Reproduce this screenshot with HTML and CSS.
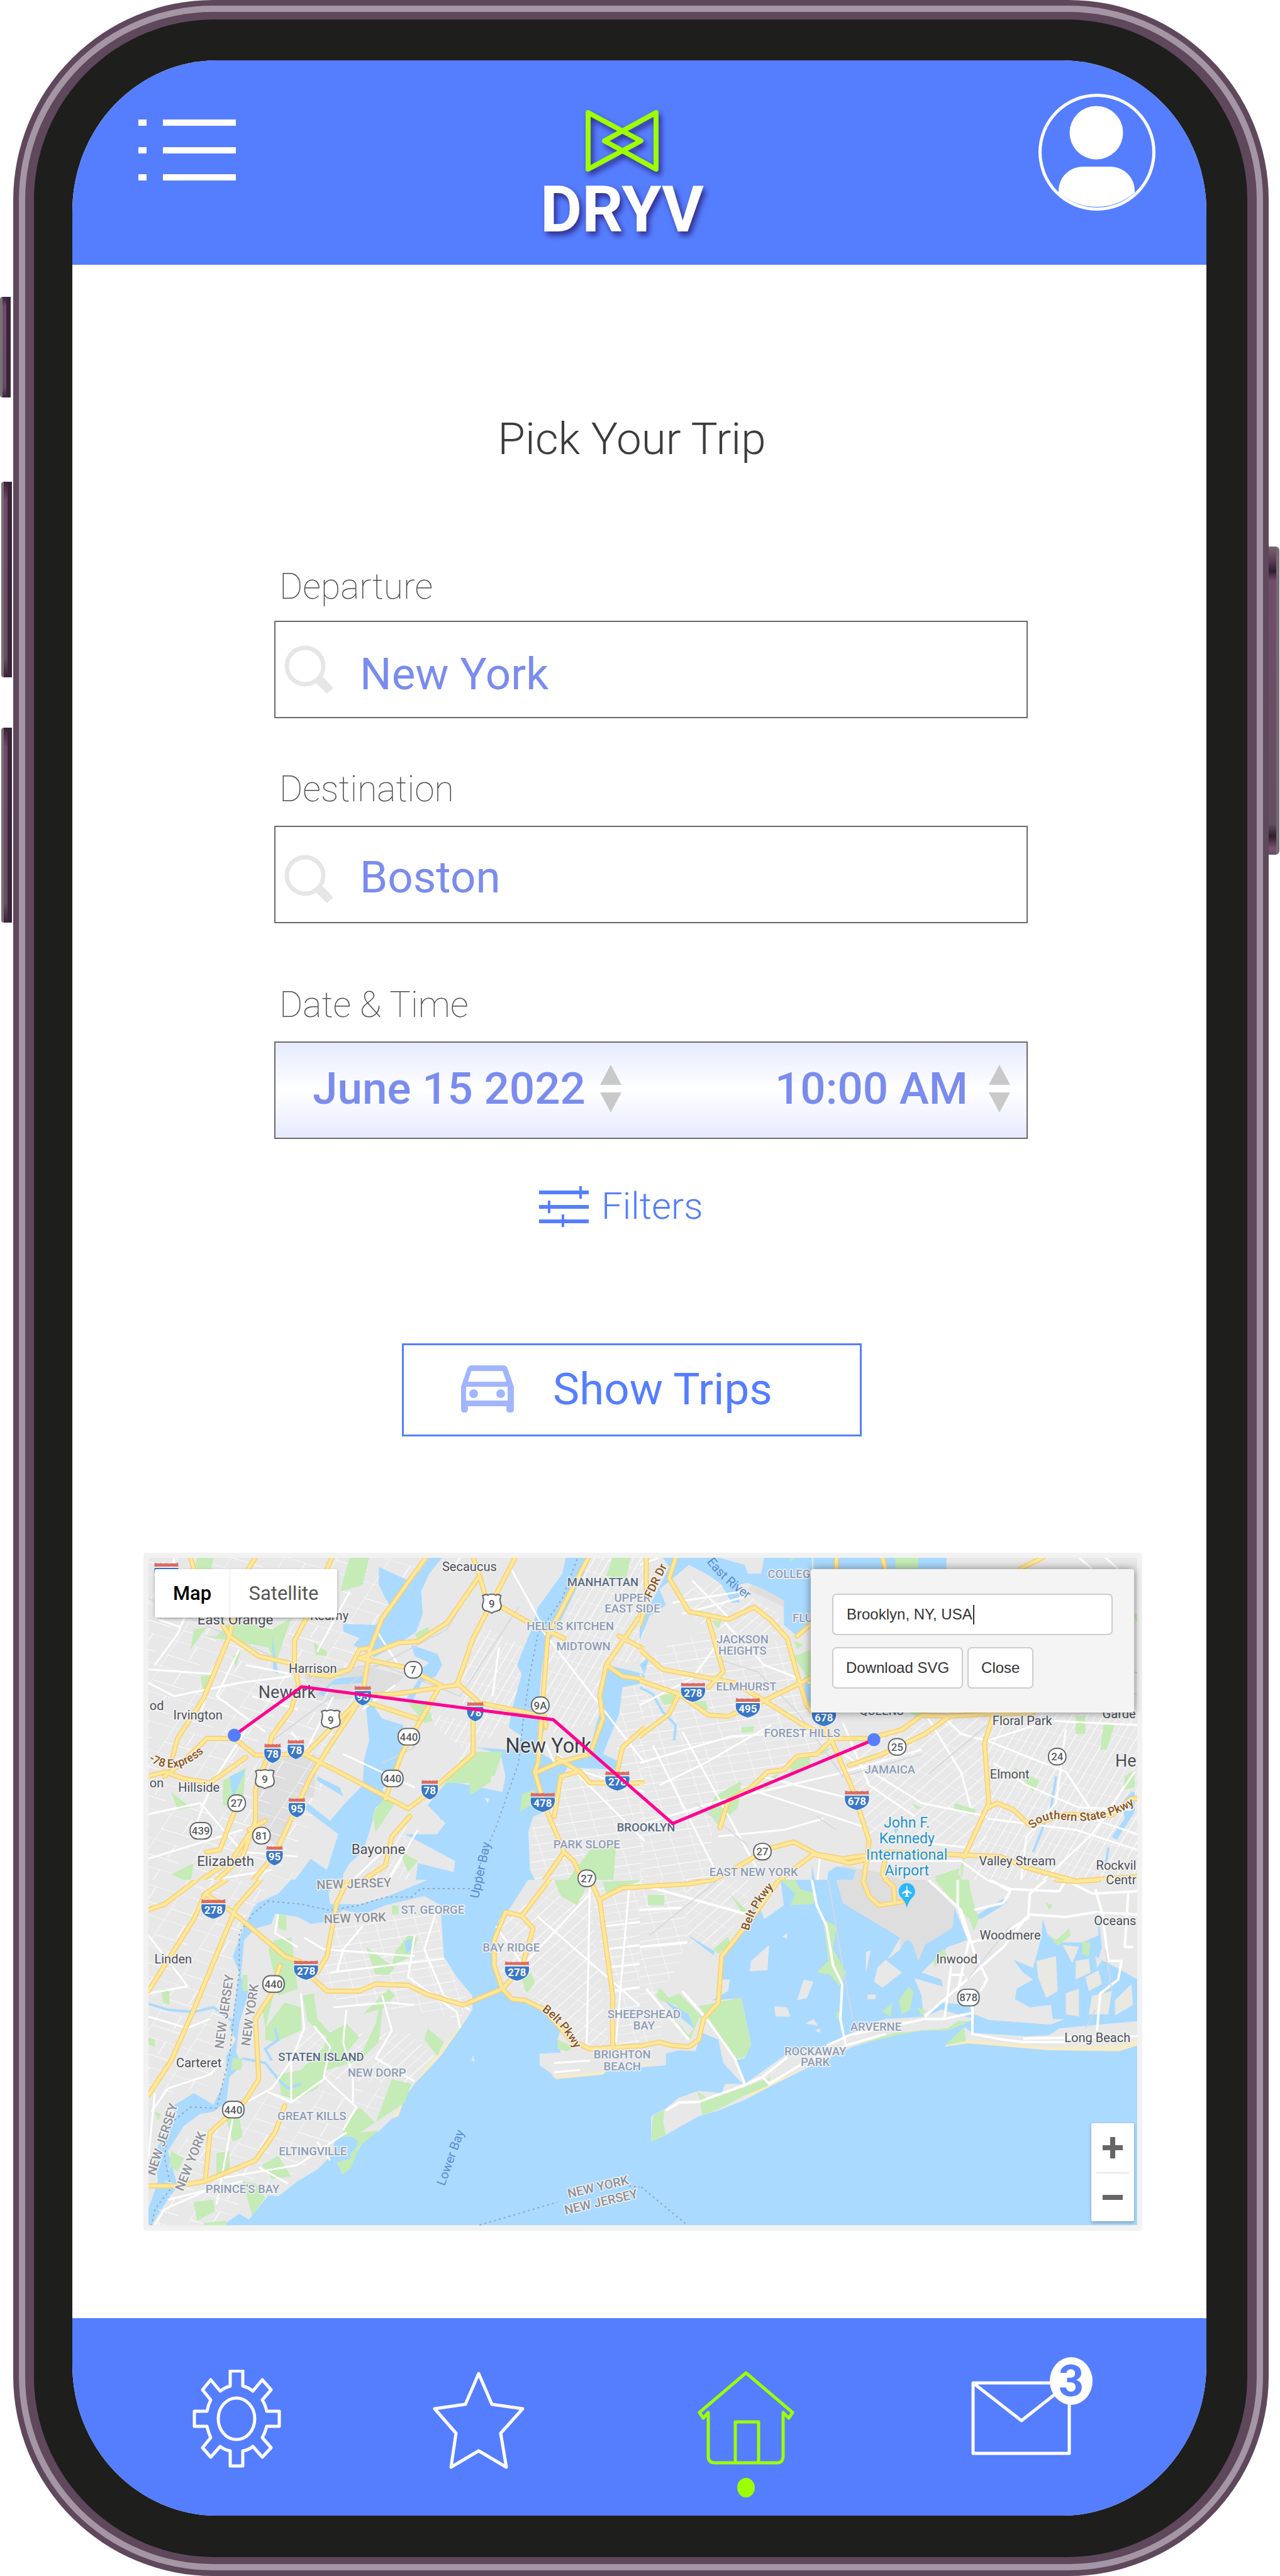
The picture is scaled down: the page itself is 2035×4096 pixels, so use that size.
FILE: index.html
```html
<!DOCTYPE html>
<html lang="en">
<head>
<meta charset="utf-8">
<meta name="viewport" content="width=device-width, initial-scale=1">
<title>DRYV – Pick Your Trip</title>
<link rel="stylesheet" href="styles.css">
</head>
<body>
<div class="device">
  <div class="side side-left">
    <span class="key key-mute"></span>
    <span class="key key-up"></span>
    <span class="key key-down"></span>
  </div>
  <div class="shell"><div class="rail"><div class="rim"><div class="bezel"><div class="screen">

    <header class="topbar">
      <button class="icon-button menu" type="button" aria-label="Menu">
        <svg width="155" height="97" viewBox="0 0 155 97" fill="#fff"><path d="M0 0h13v10H0zM39 0h116v10H39zM0 44h13v10H0zM39 44h116v10H39zM0 87h13v10H0zM39 87h116v10H39z"/></svg>
      </button>
      <a class="brand" href="#">
        <svg class="brand-mark" width="118" height="100" viewBox="0 0 118 100" fill="none" stroke="#9eff00" stroke-width="8" stroke-linejoin="round"><path d="M5 5v90l84-45zM113 5v90L31 50z"/></svg>
        <span class="brand-name">DRYV</span>
      </a>
      <button class="icon-button avatar" type="button" aria-label="Profile">
        <svg width="186" height="186" viewBox="0 0 186 186"><circle cx="93" cy="93" r="90.500" fill="none" stroke="#fff" stroke-width="5"/><circle cx="92" cy="62" r="42.500" fill="#fff"/><path fill="#fff" d="M32 157V155C32 132 50 116 71 116H114C135 116 153 132 153 155V157A91 91 0 0 1 32 157Z"/></svg>
      </button>
    </header>

    <main class="content">
      <h1 class="title">Pick Your Trip</h1>
      <form class="trip-form">
        <div class="field">
          <label class="field-label" for="departure">Departure</label>
          <div class="control">
            <svg class="lens" width="78" height="77" viewBox="0 0 78 77"><circle cx="33" cy="33" r="29" fill="none" stroke="#e6e6e6" stroke-width="7"/><path fill="#e6e6e6" d="M49 59L60 49L78 68L68 77Z"/></svg>
            <input class="place" id="departure" type="text" value="New York">
          </div>
        </div>
        <div class="field">
          <label class="field-label" for="destination">Destination</label>
          <div class="control control-low">
            <svg class="lens" width="78" height="77" viewBox="0 0 78 77"><circle cx="33" cy="33" r="29" fill="none" stroke="#e6e6e6" stroke-width="7"/><path fill="#e6e6e6" d="M49 59L60 49L78 68L68 77Z"/></svg>
            <input class="place" id="destination" type="text" value="Boston">
          </div>
        </div>
        <div class="field field-when">
          <label class="field-label" for="date">Date &amp; Time</label>
          <div class="control control-when">
            <div class="slot">
              <input class="when when-date" id="date" type="text" value="June 15 2022">
              <button class="icon-button" type="button" aria-label="Change date"><svg width="34" height="76" viewBox="0 0 34 76" fill="#c9c9c9"><path d="M17 0L34 32H0zM0 44H34L17 76z"/></svg></button>
            </div>
            <div class="slot">
              <input class="when when-time" type="text" aria-label="Time" value="10:00 AM">
              <button class="icon-button" type="button" aria-label="Change time"><svg width="34" height="76" viewBox="0 0 34 76" fill="#c9c9c9"><path d="M17 0L34 32H0zM0 44H34L17 76z"/></svg></button>
            </div>
          </div>
        </div>
        <button class="filters" type="button">
          <svg width="79" height="65" viewBox="0 0 79 65" fill="#557eff"><path d="M0 7h79v6H0zM0 30h79v6H0zM0 53h79v6H0zM64 0h4v20h-4zM14 23h4v20h-4zM36 45h4v20h-4z"/></svg>
          <span>Filters</span>
        </button>
      </form>
      <button class="show-trips" type="button">
        <svg width="84" height="75" viewBox="0 0 84 75"><path fill="#a1b6ff" fill-rule="evenodd" d="M0 34L10 5Q12 0 17 0H67Q72 0 74 5L84 34V70Q84 75 79 75H77Q72 75 72 70V65H11V70Q11 75 6 75H5Q0 75 0 70ZM16 9L11 26H72L66 9ZM8 34V56H74V34Z"/><circle cx="20" cy="45" r="7" fill="#a1b6ff"/><circle cx="63" cy="45" r="7" fill="#a1b6ff"/></svg>
        <span>Show Trips</span>
      </button>

      <section class="map" aria-label="Trip map">
        <svg class="map-art" viewBox="307 3216 2039 1377">
          <defs>
            <pattern id="grid-steep" width="44" height="66" patternUnits="userSpaceOnUse" patternTransform="rotate(22)"><path class="st" d="M0 0H44M0 0V66M22 0V66"/></pattern>
            <pattern id="grid-flat" width="62" height="74" patternUnits="userSpaceOnUse" patternTransform="rotate(-12)"><path class="st" d="M0 0H62M0 0V74M0 40H62"/></pattern>
            <pattern id="grid-diag" width="58" height="72" patternUnits="userSpaceOnUse" patternTransform="rotate(38)"><path class="st" d="M0 0H58M0 0V72M30 0V72"/></pattern>
            <pattern id="grid-wide" width="150" height="120" patternUnits="userSpaceOnUse" patternTransform="rotate(24)"><path class="st" d="M0 0H150M0 0V120M70 0V60M0 70H110"/></pattern>
            <g id="i2"><path fill="#3a78c8" stroke="#fff" stroke-width="1" d="M-17-10H17C20 6 15 16 0 21C-15 16-20 6-17-10Z"/><path fill="#db6b63" d="M-16-20Q-12-17-8-19Q-4-17 0-19Q4-17 8-19Q12-17 16-20L17-12H-17Z"/></g>
            <g id="i3"><path fill="#3a78c8" stroke="#fff" stroke-width="1" d="M-25-10H25C28 6 20 16 0 21C-20 16-28 6-25-10Z"/><path fill="#db6b63" d="M-24-20Q-18-17-12-19Q-6-17 0-19Q6-17 12-19Q18-17 24-20L25-12H-25Z"/></g>
            <path id="u9" fill="#fff" stroke="#606468" stroke-width="2" d="M-19-16Q-12-20-8-17Q0-21 8-17Q12-20 19-16Q15-8 19 2Q21 14 10 16Q4 17 0 20Q-4 17-10 16Q-21 14-19 2Q-15-8-19-16Z"/>
            <rect id="c2" x="-18" y="-17" width="36" height="34" rx="16" fill="#fff" stroke="#606468" stroke-width="2.500"/>
            <rect id="c3" x="-22" y="-17" width="44" height="34" rx="15" fill="#fff" stroke="#606468" stroke-width="2.500"/>
            <path id="p-78" d="M307 3634Q362 3670 420 3618"/>
            <path id="p-east" d="M1458 3224Q1488 3268 1560 3314"/>
            <path id="p-south" d="M2130 3776Q2155 3750 2190 3756Q2270 3768 2338 3726"/>
            <path id="p-belt1" d="M1118 4150Q1165 4182 1196 4248"/>
            <path id="p-belt2" d="M1545 3986Q1560 3930 1604 3888"/>
          </defs>
          <rect x="307" y="3216" width="2039" height="1377" fill="#e8e8e8"/>

          <svg x="280" y="3180" width="1050" height="720" viewBox="0 0 1568 1568" preserveAspectRatio="none">
            <path class="airport" d="M430 980L560 960L550 1150L500 1180L440 1380L380 1300L370 1120ZM520 610L700 560L830 610L760 700L560 720Z"/>
            <path fill="url(#grid-wide)" d="M40 77H900L700 600L600 1000L470 1568H40Z"/>
            <path fill="url(#grid-steep)" d="M1380 77H1568V540L1440 560L1430 820L1270 870L1260 500ZM1060 380L1200 480L1160 800L1060 920L990 660ZM860 760L1040 820L1030 960L830 1290L720 1500L640 1568H850L830 1300L960 1080L1010 940Z"/>
            <path fill="url(#grid-flat)" d="M1490 660L1568 640V1568H1210L1220 1300L1330 1020L1480 1040Z"/>
            <path class="park" d="M190 77H240L230 170L165 260ZM660 77H720L700 200L630 230ZM210 430H250L300 350L420 400L480 350L430 560L410 480ZM180 400L220 390L170 490ZM1470 77H1525L1510 180L1450 160ZM550 460L590 500V520L555 515ZM860 420L900 390L915 430L870 450ZM840 730L900 720L915 810L890 820ZM270 1080L340 1020L330 1200L270 1190ZM110 1130L170 1200L130 1210ZM300 520L325 500L310 570ZM200 610L250 600L210 690Z"/>
            <path class="water" d="M905 77H945L905 150L880 230L885 330L865 410L800 475L735 525L672 470L690 440L640 410V375L740 380L790 310L770 260L750 200V120L840 180L875 140ZM850 470L930 510L945 560L925 610L880 640L855 720L835 710L875 620L870 590L905 550L860 520ZM560 690L620 620L700 610L730 700V735L760 800L825 830V910L815 1000L760 1120L780 1160L740 1200L725 1290L700 1400L660 1450L640 1500V1568H470L540 1430L590 1480L625 1320L525 1210L530 1180L600 1260L640 1190L700 1100L705 980L720 900L710 740L700 640L600 650L580 700ZM1325 77H1400L1375 170L1310 360L1260 500L1250 600L1240 780L1260 850L1230 940L1300 1000L1400 950L1420 820L1440 740L1430 650L1450 560L1568 600V640L1500 660L1490 780L1440 960L1500 1000L1480 1030L1330 1020L1300 1120L1280 1210L1225 1240L1210 1310L1215 1480L1245 1568H860L870 1450L980 1490L985 1440L830 1320L930 1320L955 1270L900 1190L960 1080L1130 1130L1140 1060L1125 960L1050 930L1150 940L1190 880L1150 840L1160 760L1190 600L1175 560L1220 400L1240 300L1315 150ZM560 1060L630 1110L640 1150L560 1080ZM915 1180L960 1240L940 1255ZM420 420L440 600L425 590ZM290 1060L340 1030L300 1160Z"/>
            <path class="park" d="M1000 990L1040 950L1132 950L1100 1080L1030 1145L1030 1090L960 1090L930 1140ZM730 1230L770 1150L800 1180L740 1310ZM1190 1140L1230 1120L1235 1170L1185 1220ZM1400 1390L1480 1370L1470 1568H1310ZM110 1500L180 1450L170 1540ZM810 1390L870 1440L840 1490Z"/>
            <path class="land" d="M1095 1060L1115 1055L1110 1085H1095ZM1075 1155L1090 1160L1085 1180Z"/>
            <path class="street" d="M120 80L60 350L140 390M200 180L130 420L60 560M40 580L240 600L200 780M320 490L250 700L400 860M340 560L480 600M360 700L500 760M600 77L560 340L400 330M660 230L560 500M40 640L120 700L320 640L480 610M740 400L810 560M800 650L700 760M610 700L520 960M350 830L240 1080L180 1300M40 1230L200 1180L330 1400L500 1420M40 1430L330 1300M60 1568L420 1480M480 860L560 1000M640 960L860 1110M980 130L1000 77M1150 110L1260 400M1240 380L1568 1000M1120 480L1100 700M1260 900L1290 1000M1300 960L1568 1350M1340 1020L1568 1130M870 1300L760 1568M760 1400L640 1568"/>
            <path class="rail-line" d="M1080 100L960 400L700 600L420 900M1180 300L1000 700L760 560L540 590M800 840L860 930L760 1000M40 260L420 520"/>
            <path class="border-line" d="M1360 85L1315 260L1240 420L1215 600L1195 800L1180 1000L1110 1290L1060 1460L1035 1568L870 1562"/>
            <g id="roads-nw">
              <path d="M170 77L190 180L290 430L380 520L470 550L540 600L600 610L660 580L690 490L715 485M370 77L330 170L290 430L210 710L130 890L115 970M605 77L530 340L490 450L490 560L502 650L480 760L420 880L405 980L370 1120L370 1260L330 1420L220 1568M40 1060L90 1040L150 1070L230 1090L340 975M90 1060L150 990L220 890L305 890L370 965L520 960L640 1050L840 1205L890 1150L1040 960L1040 760M895 77L760 350L720 500L700 690L720 730L865 800M1040 77L1060 160L960 370L870 455L810 460L690 530L830 570L940 650M1170 77L1040 440L990 650L800 690L720 695M940 650L820 960L770 1160M990 640L1060 730L1260 790L1265 840M700 700L600 920L540 1060L430 1410L340 1568M700 700L530 950M1060 160L1080 260L1200 360L1320 440M1395 77L1270 430L1240 1000L1230 1040L1260 1190L1320 1400L1350 1440L1390 1568M1568 310L1450 560L1430 700L1440 800L1400 960L1300 1000L1240 1040M1450 560L1500 610L1568 625M1300 980L1370 1040L1400 1090L1568 1090M1360 1040L1310 1060L1290 1240M1480 1060L1500 930L1568 840M1490 430L1568 490M1320 1400L1240 1568M310 1200L260 1390L220 1400M845 1240L790 1330L770 1460L660 1568M400 1260L350 1300M160 1568L300 1430L350 1320"/>
            </g>
            <use class="road-core" href="#roads-nw"/>
          </svg>

          <svg x="1320" y="3180" width="1060" height="720" viewBox="0 0 1568 1568" preserveAspectRatio="none">
            <path fill="url(#grid-flat)" d="M0 530L200 400L460 460L520 800L600 940L380 1060L220 1260V1568H0Z"/>
            <path fill="url(#grid-diag)" d="M100 250L250 160L420 330L450 430L200 400ZM600 960L800 830L1060 790V1400L700 1330Z"/>
            <path fill="url(#grid-steep)" d="M530 780H1518V1568H1000L1060 1200V790Z"/>
            <path class="airport" d="M540 1568L620 1460L760 1500L860 1568ZM250 90L310 110L320 180L260 170ZM370 160H440V300L330 220Z"/>
            <path class="water" d="M70 77H240L320 110L330 150H370L380 77H525V380L480 430L440 380L440 270L380 220L330 190L300 200L305 280H280L250 200L215 160L150 110L60 220L80 290L30 340L0 450V370L50 240L90 120ZM530 77H936V128H530ZM500 620L525 600V750L505 700ZM0 560L30 520L15 600ZM1500 1130L1470 1180L1480 1250L1440 1330L1455 1345L1510 1220V1130ZM1490 590H1518V600ZM525 1455L540 1568H525ZM575 1490L600 1465L660 1480L640 1568H570ZM775 1270L790 1300L778 1320Z"/>
            <path class="thin-water" d="M0 660L40 690L70 770L110 830L105 900M1270 1060L1255 1200L1200 1400M1430 1380L1420 1470"/>
            <path class="park" d="M455 77H475L460 95ZM780 77H850V128H780ZM470 450L500 470L480 490ZM470 520L525 490V680L500 590ZM220 360L250 360L240 400ZM60 700L120 680L110 730L75 740ZM160 720L200 720L210 760L170 760ZM310 840L350 835L345 860L310 865ZM230 1150L310 1080L300 1200L240 1280L210 1220ZM390 1070L430 1040L380 1130ZM460 1000L520 960L520 1010L460 1050ZM1330 790H1360V870H1330ZM1415 830L1450 820L1425 940H1405ZM1480 1060L1510 1030V1110L1475 1120ZM960 1180L1025 1210L1020 1235L960 1210ZM1140 1020L1220 1080L1200 1130ZM900 1510L980 1470V1568H920ZM990 1420L970 1500L985 1510ZM830 1180L860 1200L845 1210ZM530 950L590 930L560 960ZM820 770H870L850 800ZM1500 330H1518V370Z"/>
            <path class="street" d="M0 110L60 77M160 180L280 360M100 280L310 230M130 330L330 250M260 370L380 560L520 640M0 740L160 620L260 420M0 1000L280 880L520 860M60 1100L200 1000L400 830M0 1280L220 1180L600 1050L860 940M40 920L260 1568M130 860L360 1480M370 1060L700 1180M340 1120L690 1290M620 820L700 1100L840 1240M880 800L980 1040L1010 1200M620 960L860 1180L1060 1240M920 780L980 870L1060 900L1250 810L1518 830M1060 900L1300 1040L1400 1260L1518 1320M1300 850L1270 1180L1180 1330L1160 1568M1080 1000L1180 1100L1340 1200L1500 1210M1060 1250L1330 1300L1518 1390M1200 1568L1380 1320L1510 1040M750 1340L1000 1380M700 1440L980 1440L1100 1568M550 1420L540 1568M240 1330L440 1300L560 1250M1340 77L1380 128M1420 77L1460 128"/>
            <path class="rail-line" d="M250 540L360 590L480 770L620 1060L860 960M880 1050L1060 830M170 1180L330 1370M540 1240L600 1300M1230 700L1518 690"/>
            <g id="roads-ne">
              <path d="M110 77L90 170L150 320L270 355L350 300L400 360L450 440L480 600L510 740L580 880L650 1120L700 1350L680 1568M20 77V290L0 380M0 490L70 580L290 640L380 720L500 830L590 890L700 890L800 850L860 785L940 790L1060 780L1200 775M0 630L120 690L210 785L270 790L380 720L520 620M120 690L90 780L0 880M210 360L255 590L210 660M600 77V128M740 77L750 128M1160 128L1230 77M520 380L480 430M640 1010L740 960L870 870L950 785M590 890L540 960L480 970L440 1030L390 1040L340 1110L270 1170L245 1290M1080 780L1052 910L1065 1180L990 1420M1065 1200L1090 1180L1140 1210L1190 1280L1300 1230L1440 1235L1500 1160H1518M0 1550L220 1530L330 1440L380 1390L470 1355L540 1410L620 1430L760 1400L1100 1420L1180 1470L1330 1530L1518 1510M400 1568L440 1510L530 1410L640 1450L700 1430M750 1420L740 1500L775 1568"/>
            </g>
            <use class="road-core" href="#roads-ne"/>
          </svg>

          <svg x="280" y="3880" width="1050" height="750" viewBox="0 0 1568 1568" preserveAspectRatio="none">
            <path class="water" d="M40 0H1568V1489H40Z"/>
            <path class="land" d="M40 0H480L440 60L370 105L335 200L300 330L320 400L300 600L290 640L310 690L280 760L280 840L265 900L240 970L180 920L110 980L130 1010L90 1090L60 1180L70 1300L40 1420ZM610 0H900L850 30L770 75L690 105H600L595 60ZM430 145L500 160L540 190L600 180L640 130L700 150L770 110L890 70L940 110L950 330L990 420L1038 500V560L1000 640L940 760L860 880L830 940L790 1030L750 1085L710 1110L685 1170L660 1230L638 1270L622 1220L665 1200L685 1150L670 1110L640 1100L612 1130L610 1180L560 1250L500 1300L440 1365L410 1360L350 1465L320 1440L270 1489H50L90 1400L130 1320L100 1170L150 1060L200 1010L240 1000L280 960L290 850L330 800L310 745L320 620L350 480L325 420L335 260L370 210L420 190ZM1210 0H1568V800L1440 830L1290 855L1280 835L1245 800L1245 750L1310 745L1300 690L1310 640L1250 560L1190 515L1150 500L1110 400L1100 300L1120 170L1150 130ZM1035 780L1040 755L1045 785Z"/>
            <path class="sand" d="M1035 570L1000 640L940 760L860 880L900 800L960 700ZM830 940L790 1030L810 1020ZM1290 845L1450 825L1440 840L1295 860Z"/>
            <path fill="url(#grid-wide)" d="M40 0H420L300 300L290 560L250 880L40 940ZM110 1180L240 1010L400 920L840 890L600 1140L450 1320L250 1489H60Z"/>
            <path fill="url(#grid-flat)" d="M620 190L930 110L950 340L1030 540L1000 600L840 560L630 540L560 400ZM1400 0H1568V730H1480Z"/>
            <path fill="url(#grid-diag)" d="M1130 170L1280 0L1400 60L1460 740L1370 710L1230 520L1110 380ZM500 620L620 660L840 660L920 760L840 880L600 860L490 760Z"/>
            <path class="park" d="M710 290L800 380L780 410L740 410ZM840 240L870 250L850 330L790 370L800 310ZM440 150L465 150V220L440 210ZM400 640L460 530L510 550V650L430 700L400 690ZM515 500L550 490L560 600L600 660L650 620L690 680L640 760L700 740L740 620L750 560L700 580L780 470L800 500L760 560L750 700L690 780L590 820L560 900L490 950L450 930L440 840L510 820L580 720L590 680L530 610ZM430 260L480 250L500 470L440 500L410 300ZM390 540L430 470L400 640ZM900 640L950 700L930 760L890 690ZM790 860L850 880L830 960L640 1140L640 1070L690 980L740 1050ZM640 1100L750 1080L690 1150L665 1240L640 1270L620 1220L665 1200ZM110 1170L150 1200L130 1260L105 1230ZM280 1030L320 1020L330 1110L300 1130ZM250 1180L290 1170V1260L250 1270ZM390 1230L440 1190L480 1280L420 1290ZM180 1390L240 1380L245 1430L190 1470ZM330 1300L370 1310L400 1370L360 1450ZM210 1480L280 1470V1489H210ZM300 770L330 770L325 820L295 820ZM1290 0H1400L1360 110L1310 70ZM1440 10L1568 0L1450 60ZM1190 430L1220 400L1230 450L1205 490ZM1300 690L1350 720L1330 740L1300 730ZM80 470L105 480V540L85 530ZM60 1000L80 1010L70 1040ZM330 410H345V480H330ZM790 110H810V150H790ZM40 680L60 690V720L40 710ZM200 60L220 50L215 100Z"/>
            <path class="water" d="M640 1110Q670 1100 685 1130Q680 1170 650 1190Q610 1170 615 1130ZM830 270L850 250L850 300L835 320Z"/>
            <path class="thin-water" d="M40 535L100 560L180 570L240 550L310 620M330 770L400 790L440 860L470 900L510 880M430 640L440 690L400 730L420 780"/>
            <path class="street" d="M40 240L140 420L160 460L40 490M40 590L160 640L230 600M50 1000L100 900L230 840L270 780M40 1200L60 920M600 400L950 340M520 250L580 300L860 330M610 550L780 530L860 540M510 490L520 640L480 780V960M480 780L420 900L340 960M550 630L600 720L580 850L680 980L640 1080M590 850L480 960L400 910M860 240L840 420L990 570L1000 640M760 500L790 650L740 770L860 870M650 560L640 700L670 850V960M930 120L890 300L950 500L1030 560M700 200L640 300L620 400M440 150L430 230L500 290M250 1290L500 1230L650 1090M300 1030L250 1400M380 1240L470 1310M560 1130L600 1210M100 1380L330 1300M60 1489L90 1420L220 1340M1290 790L1400 780M1290 830L1370 820M1110 200L1210 400M1140 450L1400 60M1240 160L1568 560M1400 0L1390 710M1520 40L1480 700M1450 200L1568 180M1450 300L1568 280M1450 380L1568 360M1460 480L1568 460"/>
            <path class="border-line" d="M1030 38H880L850 75H770L690 110L600 132L510 105L410 92L360 150L320 230V400L305 560L290 760L250 985L170 980L100 1060L90 1200L110 1330L60 1420L50 1489M1060 1489L1300 1390M1520 1320L1568 1330"/>
            <g id="roads-sw">
              <path d="M40 130L90 105L190 0M280 0L215 60L180 170L40 480M385 0L310 120L180 560L110 780L40 930M215 60L300 140L460 330L520 360L550 430L590 480L690 480L740 450L840 455L900 495L1010 540L1130 470L1190 380L1225 210L1190 155L1140 140L1105 260V370L1130 470L1160 515L1200 520L1260 560L1340 690L1400 730L1568 715M1190 155L1275 0M655 0L620 100L590 330L560 400M445 370L420 490L370 600L380 860L340 950L230 1090L215 1300L370 1210L430 1090L460 975M40 1320H130L215 1300M1400 0L1430 90L1470 500V710M1430 85L1500 35L1568 30"/>
            </g>
            <use class="road-core" href="#roads-sw"/>
          </svg>

          <svg x="1320" y="3880" width="1060" height="750" viewBox="0 0 1568 1568" preserveAspectRatio="none">
            <path class="water" d="M0 0H1518V1489H0Z"/>
            <path class="land" d="M0 0H430L435 60L440 110L430 120L380 170L350 60L340 160L250 320L245 430L275 430L270 480L220 520L310 510L340 710L320 770L290 780L320 890L255 790L240 690L190 660L170 740L120 735L80 750V800L0 810ZM340 350L395 280L390 390L335 395ZM410 545L450 550L460 590H415ZM480 520L500 430L530 440L510 510ZM505 620L530 600L545 630ZM435 245L450 230V255ZM535 650L550 640V660ZM690 310L705 305L690 400ZM695 495H720V515H695ZM725 380L750 345L800 400L740 465L715 440Z"/>
            <path class="land" d="M600 0H1518V600L1360 605L1260 625L1020 600L1005 540L925 530L865 590L860 500L838 425L925 460L920 430L860 400L940 290L1000 260L960 120L955 205L870 280L850 350L835 285Q815 230 795 300L755 345L795 250L620 100ZM35 1130V1020L80 985L120 940L180 910L250 920L260 880H320L360 840L440 760L570 715L620 680L700 620L750 600L870 590L920 560L1020 600L940 650L860 650L780 665L650 720L500 820L400 890L320 950L240 995L180 1020L80 1100ZM930 720L990 635L1015 660L1180 675L1250 670L1280 640L1518 605V715L1460 735L1250 725L1000 705Z"/>
            <path class="airport" d="M600 0H880L960 120L955 205L870 280L850 350L835 285Q815 230 795 300L795 250L620 100Z"/>
            <path class="water" d="M1230 170L1245 240L1290 270H1350L1400 240L1395 120L1410 290L1400 340L1470 390L1518 430V600L1400 605L1260 600L1255 540L1190 550L1145 515L1150 470L1200 430L1170 400L1140 345L1200 380L1225 250ZM1020 160L1110 80L1120 100L1040 170ZM1020 580L1110 630L1250 625L1300 600L1518 600V610L1280 640L1250 668L1120 665L1020 640Z"/>
            <path fill="#eae8e2" d="M1210 350L1270 330L1275 480L1240 510L1215 420ZM1330 350L1370 340L1375 400L1330 430ZM1360 420L1400 390L1410 450L1370 480ZM1390 330L1410 350L1395 380ZM1290 280L1340 290L1320 360ZM1300 490L1340 470V590L1300 580ZM1380 500L1440 480L1430 580L1370 580ZM1450 520L1500 450L1505 540L1450 585Z"/>
            <path fill="url(#grid-flat)" d="M0 0H140L140 280L100 420L0 560ZM0 600H70V700H0Z"/>
            <path fill="url(#grid-diag)" d="M140 0H350L320 140L240 290L140 280Z"/>
            <path class="sand" d="M930 720L1000 705L1250 735L1460 740L1518 715V690L1460 715L1250 720L1000 690ZM500 815L400 890L330 940L335 910ZM5 790H40L20 805Z"/>
            <path class="park" d="M430 0H475L490 40L540 60L530 105L460 110L475 60ZM180 545L310 508L340 715L320 765L290 775L210 600ZM120 490L190 590L180 600L155 690L50 500L60 465L90 510ZM60 520L150 670L165 640L110 540ZM560 170L600 200L590 300L630 400L610 460L580 410L540 400L575 350ZM225 300L270 245L275 275L240 320ZM275 60L325 130L315 150ZM25 65H75V110H25ZM900 0H1005L1010 60L1035 170L1020 220L1005 170L970 120ZM820 462L835 480L825 560L800 580L790 520ZM740 570L770 530L765 590ZM895 350L925 295L945 340L900 375ZM1240 230L1270 260L1310 210L1315 240L1275 285ZM1350 265L1375 270L1370 330L1350 320ZM35 1130L40 1020L75 990L72 1045L80 1098ZM185 955L320 895L400 850L390 890L320 930L240 990L190 1015ZM175 912L205 940L185 955ZM930 715L990 635L995 695ZM650 715L780 660L940 640L970 610L1010 610L940 650L860 652L780 672ZM1235 95L1260 110L1250 130ZM600 570H610V600H600ZM845 550L875 565L860 585Z"/>
            <path class="water" d="M75 520L150 580L165 640L130 600ZM150 240L230 310L225 325L155 250Z"/>
            <path class="street street-strong" d="M525 0L540 110L570 200L590 370L618 450L612 600L628 710M80 995L120 960L180 958L320 885L375 850L450 765M375 850L395 880L500 790L640 710L750 665M570 715L640 670L870 600H930L1010 575M1015 540V665L1110 690L1170 700L1300 700M1170 685L1518 675M130 480L210 610L290 770L322 885M880 0L980 130L1020 310L1060 430L1040 480M970 0V110L1005 260L970 480M1180 160L1110 290L990 440L870 590M1010 270L1100 240L1185 165L1190 60L1240 0M1190 150L1300 160L1390 140L1518 150M1020 130L1110 100L1130 50L1070 0M1390 40L1410 140L1430 350H1470L1460 430L1405 490L1395 650M1490 60L1480 290H1505M950 370L930 600M1060 0L1130 40L1280 50L1300 0L1380 60L1518 50M945 410H990M150 690L20 470M0 130L130 120M0 290L145 270M0 20L330 150"/>
            <path class="rail-line" d="M575 0L620 380L650 600M1130 200L1000 430M1390 560L1360 640M1420 300L1440 480M240 0L30 240"/>
            <path class="border-line" d="M5 1325L145 1489"/>
            <g id="roads-se">
              <path d="M425 0L340 170L250 330L240 530L195 600L180 690L150 720L100 715L60 700L0 718M0 30L150 18L225 0M680 0L700 70L730 110L800 95M750 0L775 30L778 95M1270 0L1330 8L1400 0"/>
            </g>
            <use class="road-core" href="#roads-se"/>
          </svg>

          <g class="lb town">
            <text x="969" y="3243">Secaucus</text><text x="486" y="3354" class="t29">East Orange</text><text x="680" y="3345">Kearny</text><text x="646" y="3453">Harrison</text><text x="593" y="3505" class="t35">Newark</text><text x="409" y="3550">Irvington</text><text x="324" y="3530">od</text><text x="411" y="3699">Hillside</text><text x="324" y="3690">on</text><text x="1132" y="3618" class="t42">New York</text><text x="781" y="3827" class="t29">Bayonne</text><text x="466" y="3851" class="t29">Elizabeth</text>
            <text x="2109" y="3561">Floral Park</text><text x="2083" y="3671">Elmont</text><text x="2099" y="3850">Valley Stream</text>
            <text x="358" y="4053">Linden</text><text x="411" y="4267">Carteret</text><text x="2084" y="4003">Woodmere</text><text x="1974" y="4053">Inwood</text><text x="2264" y="4215">Long Beach</text>
          </g>
          <g class="lb town edge">
            <text x="2343" y="3547">Garde</text><text x="2344" y="3647" class="t35">He</text><text x="2344" y="3860">Rockvil</text><text x="2344" y="3889">Centr</text><text x="2344" y="3973">Oceans</text>
          </g>
          <g class="lb borough">
            <text x="1244" y="3274">MANHATTAN</text><text x="1333" y="3780">BROOKLYN</text><text x="1819" y="3540">QUEENS</text><text x="663" y="4254">STATEN ISLAND</text>
          </g>
          <g class="lb hood">
            <text x="1305" y="3307">UPPER</text><text x="1305" y="3329">EAST SIDE</text><text x="1177" y="3365">HELL'S KITCHEN</text><text x="1204" y="3407">MIDTOWN</text><text x="1211" y="3815">PARK SLOPE</text><text x="1628" y="3257">COLLEG</text><text x="1656" y="3348">FLU</text><text x="1532" y="3392">JACKSON</text><text x="1532" y="3416">HEIGHTS</text><text x="1540" y="3490">ELMHURST</text><text x="1655" y="3586">FOREST HILLS</text><text x="1836" y="3661">JAMAICA</text><text x="1555" y="3872">EAST NEW YORK</text>
            <text x="893" y="3950">ST. GEORGE</text><text x="1055" y="4028">BAY RIDGE</text><text x="778" y="4286">NEW DORP</text><text x="644" y="4375">GREAT KILLS</text><text x="646" y="4448">ELTINGVILLE</text><text x="501" y="4526">PRINCE'S BAY</text><text x="1284" y="4248">BRIGHTON</text><text x="1284" y="4273">BEACH</text><text x="1329" y="4166">SHEEPSHEAD</text><text x="1329" y="4189">BAY</text><text x="1807" y="4192">ARVERNE</text><text x="1682" y="4242">ROCKAWAY</text><text x="1682" y="4264">PARK</text>
          </g>
          <g class="lb state">
            <text transform="translate(731 3897) rotate(-2)">NEW JERSEY</text><text transform="translate(733 3968) rotate(-2)">NEW YORK</text><text transform="translate(472 4153) rotate(-82)">NEW JERSEY</text><text transform="translate(525 4160) rotate(-82)">NEW YORK</text><text transform="translate(344 4418) rotate(-72)">NEW JERSEY</text><text transform="translate(402 4464) rotate(-68)">NEW YORK</text><text transform="translate(1236 4522) rotate(-13)">NEW YORK</text><text transform="translate(1242 4553) rotate(-13)">NEW JERSEY</text>
          </g>
          <g class="lb sea">
            <text transform="translate(1000 3862) rotate(-78)">Upper Bay</text><text transform="translate(938 4456) rotate(-70)">Lower Bay</text>
            <text class="flow"><textPath href="#p-east">East River</textPath></text>
          </g>
          <g class="lb pkwy">
            <text><textPath href="#p-78">-78 Express</textPath></text><text><textPath href="#p-south">Southern State Pkwy</textPath></text><text><textPath href="#p-belt1">Belt Pkwy</textPath></text><text><textPath href="#p-belt2">Belt Pkwy</textPath></text>
            <text transform="translate(1344 3300) rotate(-64)">FDR Dr</text>
          </g>
          <g class="lb air">
            <text x="1871" y="3772">John F.</text><text x="1871" y="3805">Kennedy</text><text x="1871" y="3838">International</text><text x="1871" y="3871">Airport</text>
          </g>
          <path fill="#2cb8ff" d="M1871 3938Q1868 3924 1859 3916A17 17 0 1 1 1883 3916Q1874 3924 1871 3938Z"/>
          <path fill="#fff" d="M1870 3894Q1871 3891 1872 3894V3901L1881 3907V3909L1873 3907V3912L1876 3915H1866L1869 3912V3907L1861 3909V3907L1870 3901Z"/>

          <use href="#i3" x="344" y="3246"/>
          <use href="#i2" x="749" y="3500"/><use href="#i2" x="981" y="3533"/><use href="#i2" x="563" y="3619"/><use href="#i2" x="611" y="3611"/><use href="#i2" x="613" y="3731"/><use href="#i2" x="567" y="3830"/><use href="#i2" x="887" y="3694"/>
          <use href="#i3" x="1120" y="3720"/><use href="#i3" x="1274" y="3676"/><use href="#i3" x="1430" y="3493"/><use href="#i3" x="1543" y="3525"/><use href="#i3" x="1700" y="3543"/><use href="#i3" x="1768" y="3716"/><use href="#i3" x="441" y="3940"/><use href="#i3" x="632" y="4066"/><use href="#i3" x="1067" y="4068"/>
          <g class="num num-blue">
            <text x="749" y="3510">95</text><text x="981" y="3543">78</text><text x="563" y="3629">78</text><text x="611" y="3621">78</text><text x="613" y="3741">95</text><text x="567" y="3840">95</text><text x="887" y="3704">78</text><text x="1120" y="3730">478</text><text x="1274" y="3686">278</text><text x="1430" y="3503">278</text><text x="1543" y="3535">495</text><text x="1700" y="3553">678</text><text x="1768" y="3726">678</text><text x="441" y="3950">278</text><text x="632" y="4076">278</text><text x="1067" y="4078">278</text>
          </g>
          <use href="#u9" x="1015" y="3310"/><use href="#u9" x="683" y="3549"/><use href="#u9" x="547" y="3672"/>
          <use href="#c2" x="853" y="3447"/><use href="#c2" x="1115" y="3520"/><use href="#c2" x="489" y="3722"/><use href="#c2" x="540" y="3789"/><use href="#c2" x="1211" y="3877"/><use href="#c2" x="1851" y="3606"/><use href="#c2" x="2181" y="3626"/><use href="#c2" x="1573" y="3822"/>
          <use href="#c3" x="844" y="3585"/><use href="#c3" x="810" y="3671"/><use href="#c3" x="415" y="3779"/><use href="#c3" x="565" y="4095"/><use href="#c3" x="482" y="4354"/><use href="#c3" x="1998" y="4123"/>
          <g class="num">
            <text x="1015" y="3319">9</text><text x="683" y="3558">9</text><text x="547" y="3681">9</text><text x="853" y="3455">7</text><text x="1115" y="3528">9A</text><text x="489" y="3730">27</text><text x="540" y="3797">81</text><text x="1211" y="3885">27</text><text x="1851" y="3614">25</text><text x="2181" y="3634">24</text><text x="1573" y="3830">27</text><text x="844" y="3593">440</text><text x="810" y="3679">440</text><text x="415" y="3787">439</text><text x="565" y="4103">440</text><text x="482" y="4362">440</text><text x="1998" y="4131">878</text>
          </g>
          <path fill="none" stroke="#ff0090" stroke-width="5" d="M484 3582L623 3482L1142 3550L1388 3764L1803 3591"/>
          <circle cx="484" cy="3582" r="13.500" fill="#557eff"/><circle cx="1803" cy="3591" r="13.500" fill="#557eff"/>
        </svg>
        <div class="map-type">
          <button class="type-button type-active" type="button">Map</button>
          <button class="type-button" type="button">Satellite</button>
        </div>
        <div class="map-panel">
          <div class="panel-search">
            <input class="panel-input" type="text" aria-label="Place" value="Brooklyn, NY, USA">
            <span class="caret"></span>
          </div>
          <div class="panel-actions">
            <button class="panel-button" type="button">Download SVG</button>
            <button class="panel-button" type="button">Close</button>
          </div>
        </div>
        <div class="map-zoom">
          <button class="zoom-button" type="button" aria-label="Zoom in"><svg width="32" height="34" viewBox="0 0 32 34" fill="#666"><path d="M12 0h8v13h12v8H20v13h-8V21H0v-8h12z"/></svg></button>
          <button class="zoom-button" type="button" aria-label="Zoom out"><svg width="32" height="8" viewBox="0 0 32 8" fill="#666"><path d="M0 0h32v8H0z"/></svg></button>
        </div>
      </section>
    </main>

    <nav class="tabbar" aria-label="Main">
      <a class="tab tab-gear" href="#" aria-label="Settings">
        <svg width="141" height="156" viewBox="0 0 141 156" fill="none" stroke="#fff" stroke-width="5" stroke-linejoin="round"><path d="M60 2H80V26Q89 28 96 34L111 16L125 32L111 48Q116 56 118 66H138V90H118Q116 99 111 108L125 124L111 139L96 122Q89 128 80 129V153H60V129Q52 128 44 122L29 139L16 124L29 108Q25 99 23 90H3V66H23Q25 56 29 48L16 32L29 16L44 34Q52 28 60 26Z"/><ellipse cx="70" cy="78" rx="29" ry="33"/></svg>
      </a>
      <a class="tab tab-star" href="#" aria-label="Favourites">
        <svg width="146" height="156" viewBox="0 0 146 156" fill="none" stroke="#fff" stroke-width="5" stroke-linejoin="round"><path d="M73 3L94 52L143 59L108 98L117 152L73 126L29 152L37 98L3 59L52 52Z"/></svg>
      </a>
      <a class="tab tab-home" href="#" aria-label="Home" aria-current="page">
        <svg width="154" height="149" viewBox="0 0 154 149" fill="none" stroke="#9eff00" stroke-width="5" stroke-linejoin="round"><path d="M77 3L151 66L145 75L136 66V137Q135 146 127 146H27Q18 146 17 137V66L9 75L3 66ZM60 146V81H97V146"/></svg>
        <span class="dot"></span>
      </a>
      <a class="tab tab-mail" href="#" aria-label="Messages, 3 unread">
        <svg width="159" height="118" viewBox="0 0 159 118" fill="none" stroke="#fff" stroke-width="5" stroke-linejoin="round"><path d="M3 3H156V115H3ZM3 3L80 63L156 3"/></svg>
        <span class="badge">3</span>
      </a>
    </nav>
  </div></div></div></div></div>
  <div class="side side-right"><span class="key key-power"></span></div>
</div>
</body>
</html>
```
FILE: styles.css
```css
*, *::before, *::after { box-sizing: border-box; }

body {
  margin: 0;
  background: #fff;
  color: #3c3c3c;
  font-family: Roboto, "Liberation Sans", sans-serif;
}

button { padding: 0; border: 0; background: none; color: inherit; font: inherit; cursor: pointer; }
input { padding: 0; border: 0; background: none; outline: 0; font: inherit; min-width: 0; }
a { color: inherit; text-decoration: none; }
svg { display: block; flex: none; }

/* Handset */
.device { display: grid; grid-template-columns: 21px minmax(0, 1fr) 18px; }
.side { display: flex; flex-direction: column; }
.side-left { padding-top: 472px; align-items: flex-start; }
.side-right { padding-top: 869px; }
.key {
  width: 17px;
  border-radius: 4px 0 0 4px;
  background:
    linear-gradient(90deg, #7a7078 0 4px, transparent 4px 10px, #3b2439 10px),
    linear-gradient(#3a2338, #724c69 10%, #62505f 90%, #3a2338);
}
.key-mute { height: 160px; }
.key-up { height: 311px; margin: 134px 0 0 2px; }
.key-down { height: 310px; margin: 80px 0 0 2px; }
.key-power {
  height: 490px;
  border-radius: 0 6px 6px 0;
  background:
    linear-gradient(90deg, transparent 0 12px, #766c72 12px),
    linear-gradient(#75646f, #5b3954 5%, #2d1f2c 8%, #724c69 11%, #6d4d67 40%, #62505f 90%, #2d1f2c 94%, #7f5272 98%, #62505f);
}
.shell { padding: 9px; border-radius: 318px; background: #5f475c; }
.rail { padding: 10px; border-radius: 309px; background: #a496a5; }
.rim { padding: 12px 15px 11px 14px; border-radius: 299px; background: #5f475c; }
.bezel { padding: 65px 65px 66px 61px; border-radius: 287px; background: #1e1e1c; }
.screen { overflow: hidden; border-radius: 230px / 240px; background: #fff; }

/* Header */
.topbar {
  display: grid;
  grid-template-columns: 639fr 792fr 187px;
  align-items: start;
  height: 325px;
  padding: 53px 80px 0 105px;
  background: #557eff;
}
.icon-button { display: block; justify-self: start; }
.menu { margin-top: 41px; }
.brand {
  display: flex;
  flex-direction: column;
  align-items: center;
  gap: 4px;
  justify-self: start;
  margin-top: 25px;
  color: #fff;
  filter: drop-shadow(4px 6px 5px #2f2a8c);
}
.brand-name { font-size: 102px; line-height: 110px; font-weight: 700; }

/* Trip form */
.content { padding-top: 235px; }
.title {
  margin: 0;
  padding-right: 24px;
  font-size: 71px;
  line-height: 84px;
  font-weight: 300;
  text-align: center;
}
.trip-form { padding: 159px 284px 0 321px; }
.field { margin-bottom: 79px; }
.field + .field { margin-bottom: 96px; }
.field.field-when { margin-bottom: 72px; }
.field-label {
  display: block;
  margin-bottom: 20px;
  padding-left: 8px;
  color: #4a4a4a;
  font-size: 57px;
  line-height: 68px;
  font-weight: 100;
}
.field + .field .field-label { margin-bottom: 24px; }
.control {
  display: flex;
  align-items: center;
  gap: 42px;
  height: 155px;
  padding-left: 14px;
  border: 2px solid #6a6a6c;
  color: #7a8cee;
  font-size: 71px;
}
.control-low .lens { margin-top: 14px; }
.place { flex: 1; height: 100%; padding-top: 14px; color: inherit; }
.control-low .place { padding-top: 8px; }
.control-when {
  justify-content: space-between;
  padding: 0 26px 6px 59px;
  background: linear-gradient(#e6eaff, #fff 50%, #e6eaff);
}
.slot { display: flex; align-items: center; gap: 18px; }
.when { color: inherit; font-weight: 500; }
.when-date { width: 439px; }
.when-time { width: 322px; }
.filters {
  display: flex;
  align-items: center;
  gap: 20px;
  margin-left: 421px;
  color: #557eff;
  font-size: 60px;
  line-height: 70px;
  font-weight: 300;
}
.show-trips {
  display: flex;
  align-items: center;
  gap: 62px;
  width: 731px;
  height: 148px;
  margin: 183px 548px 185px auto;
  padding: 0 0 4px 91px;
  border: 3px solid #557eff;
  color: #557eff;
  font-size: 71px;
}

/* Map */
.map {
  position: relative;
  margin: 0 102px 139px 113px;
  padding: 8px;
  border-radius: 4px;
  background: #f2f2f2;
}
.map-art { width: 100%; height: auto; }
.map-art path { vector-effect: non-scaling-stroke; }
.st { fill: none; stroke: #fff; stroke-width: 2; }
.water { fill: #aadaff; }
.land { fill: #e8e8e8; }
.park { fill: #c5ebb7; }
.sand { fill: #f6ecc6; }
.airport { fill: #dedede; }
.thin-water { fill: none; stroke: #aadaff; stroke-width: 4; }
.street { fill: none; stroke: #fff; stroke-width: 3; stroke-linejoin: round; }
.street-strong { stroke-width: 4; }
.rail-line { fill: none; stroke: #d6d9dd; stroke-width: 2; }
.border-line { fill: none; stroke: #93a3b3; stroke-width: 2; stroke-dasharray: 3 5; }
[id^="roads-"] {
  fill: none;
  stroke: var(--road, #f6cf6b);
  stroke-width: var(--road-width, 8);
  stroke-linejoin: round;
  stroke-linecap: round;
}
.road-core { --road: #ffe79b; --road-width: 5; }
.lb { font-size: 26px; text-anchor: middle; paint-order: stroke; stroke: #f3f3f3; stroke-width: 4px; stroke-linejoin: round; }
.town { fill: #4b4f57; }
.edge { text-anchor: end; }
.t29 { font-size: 29px; }
.t35 { font-size: 35px; }
.t42 { font-size: 42px; fill: #3c4046; }
.borough { fill: #566a83; font-size: 24px; font-weight: 500; }
.hood { fill: #8c9cb6; font-size: 24px; font-weight: 500; }
.state { fill: #8d9097; font-weight: 500; }
.sea { fill: #5b8bd0; stroke: none; }
.pkwy { fill: #8a5419; font-size: 24px; font-weight: 500; }
.pkwy text, .flow { text-anchor: start; }
.air { fill: #1f92cf; font-size: 30px; }
.num { fill: #55595e; font-size: 22px; font-weight: 500; text-anchor: middle; }
.num-blue { fill: #fff; font-weight: 700; }

.map-type {
  position: absolute;
  top: 26px;
  left: 18px;
  display: flex;
  height: 77px;
  border-radius: 3px;
  background: #fff;
  box-shadow: 0 2px 5px rgba(0, 0, 0, .3);
}
.type-button { width: 170px; color: #565656; font-size: 31px; }
.type-active { width: 120px; border-right: 1px solid #e6e6e6; color: #000; font-weight: 500; }
.map-panel {
  position: absolute;
  top: 26px;
  right: 13px;
  width: 514px;
  height: 228px;
  padding: 39px 34px 0;
  border-radius: 4px;
  background: #f4f4f4;
  box-shadow: 0 0 14px rgba(0, 0, 0, .45);
  color: #333;
  font: 24px "Liberation Sans", Arial, sans-serif;
}
.panel-search { position: relative; }
.panel-input {
  width: 100%;
  height: 66px;
  padding: 0 21px;
  border: 2px solid #ccc;
  border-radius: 7px;
  background: #fff;
  color: #333;
}
.caret { position: absolute; left: 224px; top: 18px; width: 2px; height: 31px; background: #333; }
.panel-actions { display: flex; gap: 7px; margin-top: 19px; }
.panel-button {
  height: 66px;
  padding: 0 20px;
  border: 2px solid #ccc;
  border-radius: 7px;
  background: #fff;
}
.map-zoom {
  position: absolute;
  right: 13px;
  bottom: 15px;
  width: 68px;
  padding: 0 8px;
  border-radius: 3px;
  background: #fff;
  box-shadow: 0 2px 5px rgba(0, 0, 0, .3);
}
.zoom-button { display: flex; align-items: center; justify-content: center; width: 100%; height: 78px; }
.zoom-button + .zoom-button { border-top: 2px solid #e6e6e6; }

/* Tab bar */
.tabbar {
  display: grid;
  grid-template-columns: 382fr 421fr 435fr 374fr;
  align-items: start;
  height: 314px;
  padding: 82px 0 0 191px;
  background: #557eff;
}
.tab { position: relative; justify-self: start; }
.tab-star { margin-top: 3px; }
.tab-home { margin-top: 2px; }
.tab-mail { margin-top: 18px; }
.dot { display: block; width: 28px; height: 31px; margin: 21px auto 0; border-radius: 50%; background: #9eff00; }
.badge {
  position: absolute;
  top: -38px;
  left: 125px;
  width: 68px;
  height: 76px;
  border-radius: 50%;
  background: #fff;
  color: #557eff;
  font-size: 70px;
  line-height: 76px;
  font-weight: 700;
  text-align: center;
}
```
